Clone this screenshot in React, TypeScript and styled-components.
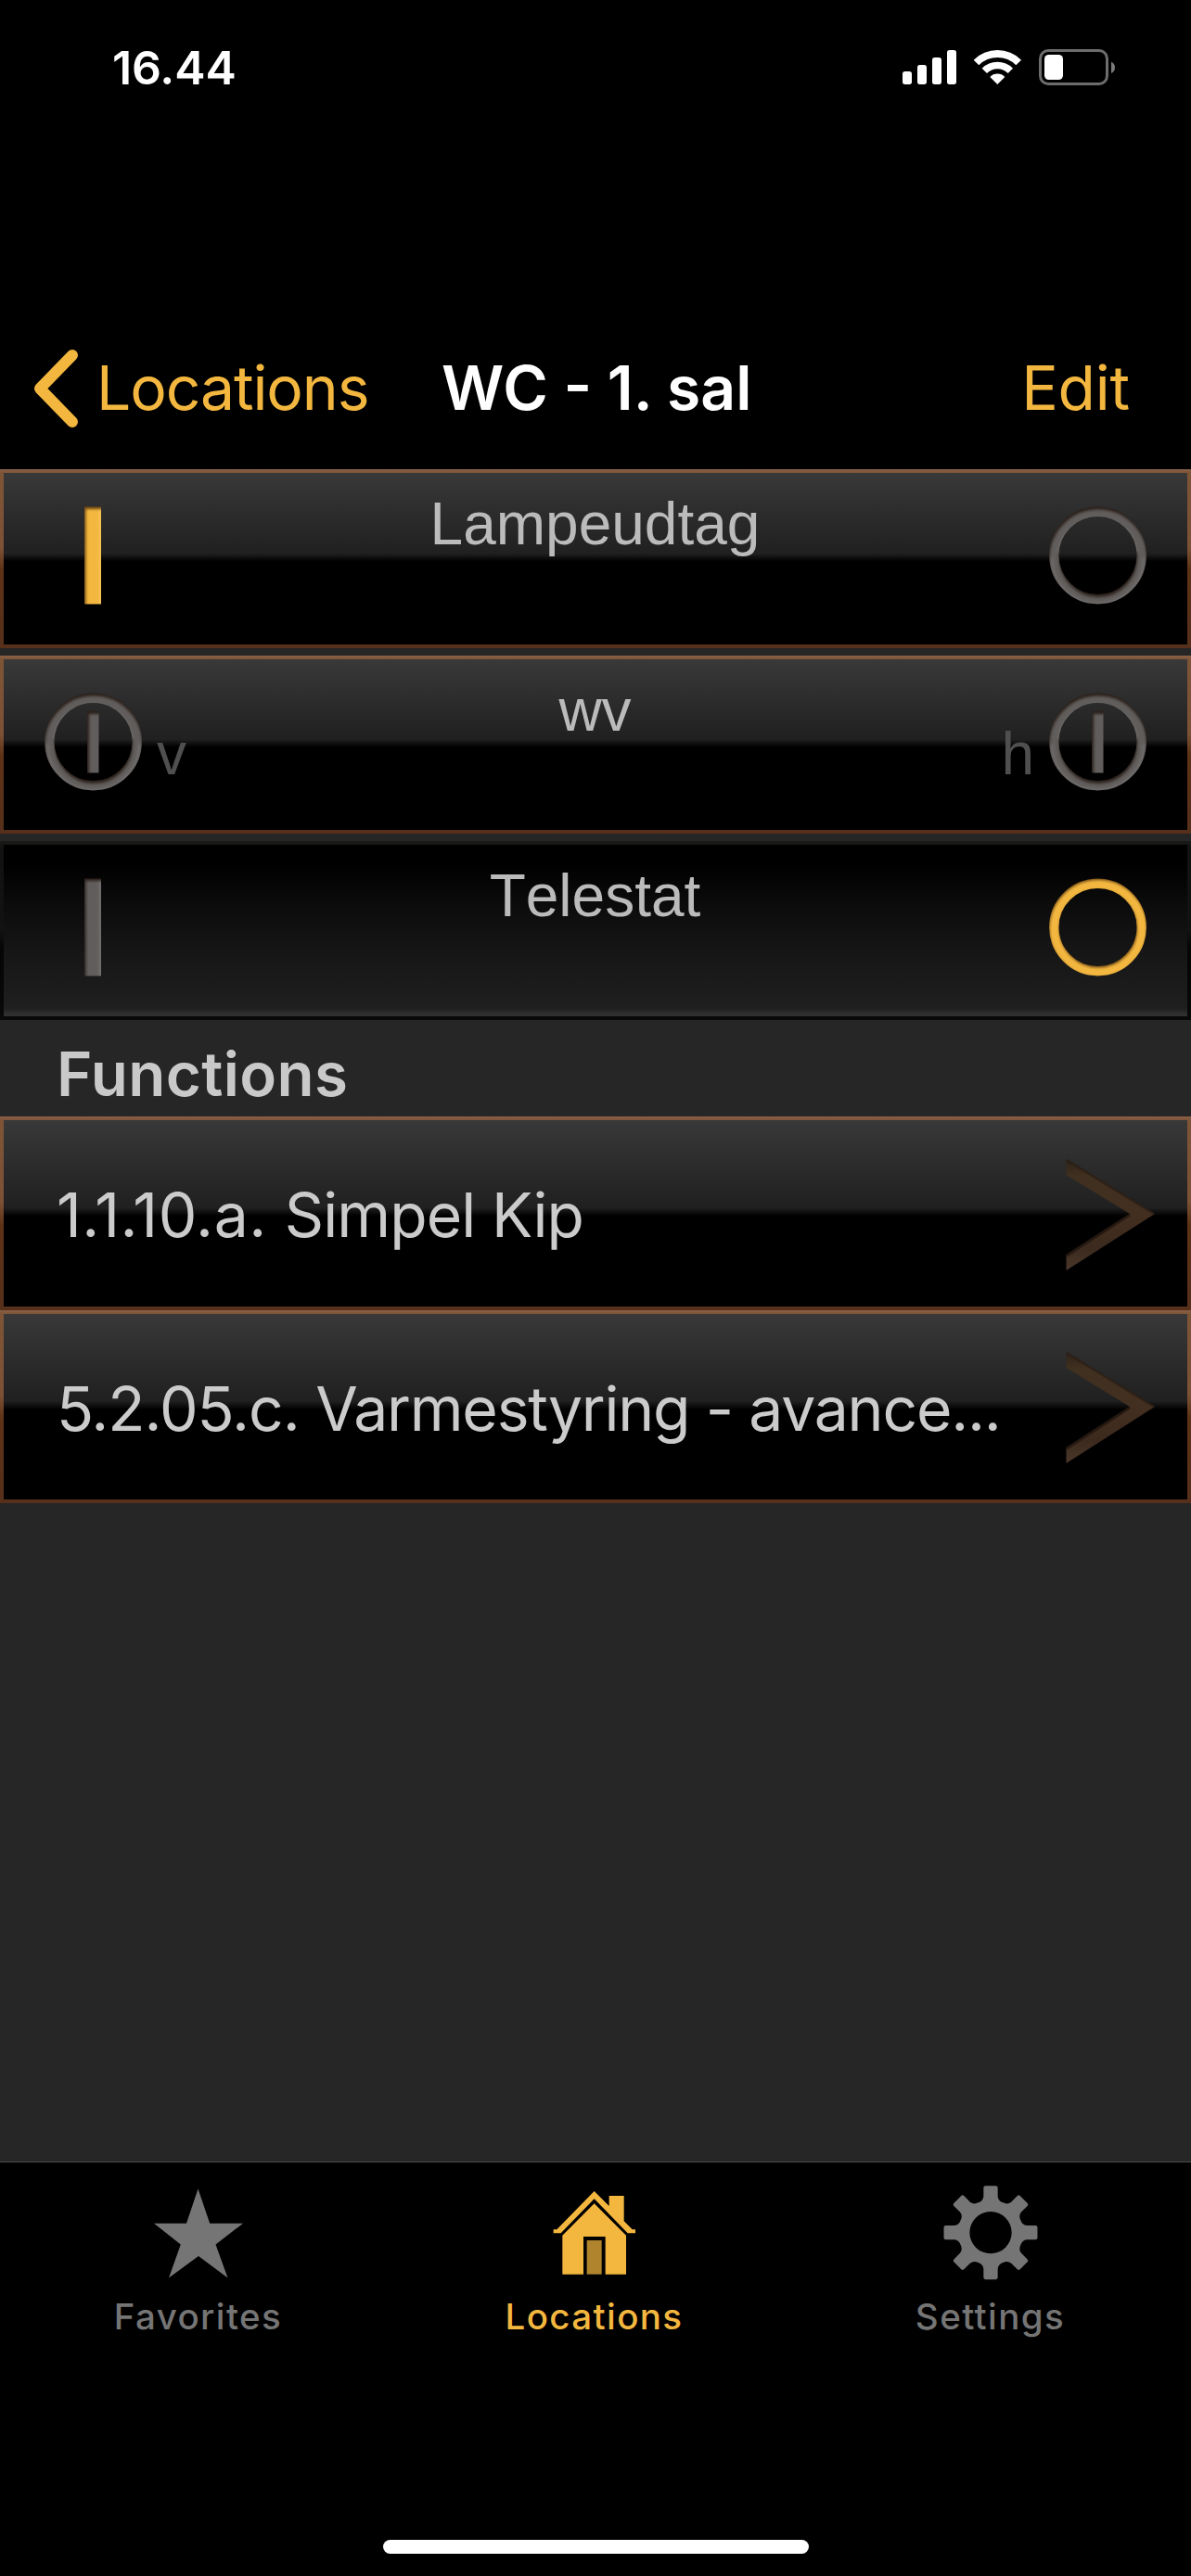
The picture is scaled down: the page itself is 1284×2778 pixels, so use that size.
import React from "react";
import styled, { createGlobalStyle, css } from "styled-components";

const AMBER = "#f3b73f";
const GREY = "#757575";

const GlobalStyle = createGlobalStyle`
  html, body { margin: 0; padding: 0; background: #000; }
  * { box-sizing: border-box; }
  svg { display: block; }
`;

const Screen = styled.div`
  width: 1284px;
  height: 2778px;
  display: flex;
  flex-direction: column;
  background: #262626;
  font-family: Inter, "Liberation Sans", sans-serif;
  overflow: hidden;
`;

const StatusBar = styled.header`
  height: 146px;
  flex: none;
  padding: 0 80px 0 121px;
  display: flex;
  align-items: center;
  justify-content: space-between;
  background: #000;
`;

const Clock = styled.span`
  font-size: 50px;
  line-height: 60px;
  font-weight: 600;
  letter-spacing: -0.1px;
  color: #fff;
`;

const NavBar = styled.nav`
  height: 360px;
  flex: none;
  padding: 184px 66px 0 36px;
  display: grid;
  grid-template-columns: 440px 1fr auto;
  align-items: start;
  background: #000;
`;

const navText = css`
  font-size: 66px;
  line-height: 176px;
  white-space: nowrap;
`;

const BackButton = styled.div`
  ${navText}
  display: flex;
  align-items: center;
  gap: 14px;
  color: ${AMBER};
  letter-spacing: -1.1px;
`;

const NavTitle = styled.h1`
  ${navText}
  margin: 0;
  font-weight: 600;
  color: #fff;
`;

const EditButton = styled.div`
  ${navText}
  color: ${AMBER};
  letter-spacing: -0.2px;
`;

const Content = styled.main`
  flex: 1;
  display: flex;
  flex-direction: column;
`;

const DeviceList = styled.section`
  display: flex;
  flex-direction: column;
  gap: 8px;
`;

const glossyFrame = css`
  background: linear-gradient(#8a6148, #7e5437 4px, #7c5135 44%, #5e3217 56%, #56301b);
`;

const glossyFill = css`
  background: linear-gradient(#393939 0, #373737 6px, #202020 47%, #000 51.5%);
`;

const DeviceFrame = styled.div<{ $height: number; $flat?: boolean }>`
  height: ${(p) => p.$height}px;
  padding: 4px;
  ${(p) =>
    p.$flat
      ? css`background: linear-gradient(#1a1a18, #121212 8px, #121212 50%, #050505 60%, #090909);`
      : glossyFrame}
`;

const DevicePanel = styled.div<{ $flat?: boolean }>`
  height: 100%;
  display: grid;
  grid-template-columns: 240px 1fr 240px;
  padding: 0 44px 0 43px;
  ${(p) =>
    p.$flat
      ? css`background: linear-gradient(#000 0, #000 20px, #0b0b0b 33%, #151515 60%, #1f1f1f 176px, #303030 183px);`
      : glossyFill}
`;

const Side = styled.div<{ $end?: boolean }>`
  display: flex;
  flex-direction: ${(p) => (p.$end ? "row-reverse" : "row")};
  gap: 15px;
  margin-right: ${(p) => (p.$end ? "-1px" : "0")};
  padding-top: 35px;
`;

const SideLabel = styled.span`
  font-family: "Liberation Sans", Arial, sans-serif;
  font-size: 64px;
  line-height: 74px;
  padding-top: 30px;
  color: #4f4f4f;
`;

const DeviceName = styled.div`
  font-family: "Liberation Sans", Arial, sans-serif;
  font-size: 64px;
  line-height: 74px;
  font-kerning: none;
  padding-top: 18px;
  text-align: center;
  color: #bbb;
`;

const SectionTitle = styled.h2`
  margin: 0;
  height: 104px;
  padding: 18px 0 0 61px;
  font-size: 65.5px;
  line-height: 82px;
  font-weight: 600;
  letter-spacing: 0.4px;
  color: #c9c9c9;
`;

const FunctionFrame = styled.div<{ $height: number }>`
  height: ${(p) => p.$height}px;
  padding: 4px;
  ${glossyFrame}
`;

const FunctionPanel = styled.div`
  height: 100%;
  display: flex;
  align-items: center;
  justify-content: space-between;
  padding: 3px 34px 0 57px;
  ${glossyFill}
`;

const FunctionName = styled.div`
  font-size: 66px;
  line-height: 80px;
  color: #cbcbcb;
  white-space: pre;
`;

const Tracked = styled.span<{ $spacing: number }>`
  letter-spacing: ${(p) => p.$spacing}px;
`;

const TabBar = styled.footer`
  height: 447px;
  flex: none;
  display: flex;
  flex-direction: column;
  justify-content: space-between;
  padding-bottom: 24px;
  border-top: 1px solid #4d4d4d;
  background: #000;
`;

const Tabs = styled.div`
  padding-top: 22px;
  display: grid;
  grid-template-columns: repeat(3, 427px);
`;

const Tab = styled.div<{ $active?: boolean }>`
  display: flex;
  flex-direction: column;
  align-items: center;
  gap: 11px;
  color: ${(p) => (p.$active ? AMBER : GREY)};
`;

const TabLabel = styled.span`
  font-size: 38.5px;
  line-height: 50px;
  font-weight: 500;
  letter-spacing: 1.4px;
`;

const HomeIndicator = styled.div`
  align-self: center;
  width: 459px;
  height: 15px;
  border-radius: 8px;
  background: #fff;
`;

function StatusIcons() {
  return (
    <svg width="232" height="42" viewBox="96 66 696 126">
      <g fill="#fff">
        <rect x="99" y="141" width="30" height="42" rx="8" />
        <rect x="147" y="120" width="30" height="63" rx="8" />
        <rect x="195" y="96" width="30" height="87" rx="8" />
        <rect x="243" y="72" width="30" height="111" rx="8" />
        <path d="M329 104A109 109 0 0 1 483 104L466 121A84 84 0 0 0 346 121Z" />
        <path d="M356 131A71 71 0 0 1 456 131L440 147A48 48 0 0 0 372 147Z" />
        <path d="M382 159A33 33 0 0 1 430 159L406 183Z" />
        <rect x="558" y="87" width="60" height="81" rx="14" />
      </g>
      <rect x="544.5" y="73.5" width="216" height="108" rx="26" fill="none" stroke="#6d6d6d" strokeWidth="9" />
      <path d="M774 110Q786 115 786 128.500Q786 142 774 147Z" fill="#7a7a7a" />
    </svg>
  );
}

function BackChevron() {
  return (
    <svg width="54" height="90" viewBox="0 0 54 90">
      <path d="M42 10L7 46L42 82" fill="none" stroke={AMBER} strokeWidth="12" strokeLinecap="round" strokeLinejoin="round" />
    </svg>
  );
}

type IndicatorKind = "bar" | "ring" | "power";

function Indicator({ id, kind, lit }: { id: string; kind: IndicatorKind; lit?: boolean }) {
  const edge = lit ? "#6b4310" : "#2b201a";
  const fill = lit ? AMBER : "#615d5c";
  const rim = lit ? "#fbc765" : "#7c7a79";
  return (
    <svg width="107" height="112" viewBox="0 0 107 112">
      <defs>
        <filter id={`${id}-soft`} x="-10%" y="-10%" width="120%" height="120%">
          <feGaussianBlur stdDeviation="1.4" />
        </filter>
        <mask id={`${id}-mask`} maskUnits="userSpaceOnUse" x="0" y="0" width="107" height="112">
          {kind === "bar" ? (
            <rect x="44" y="1.500" width="18" height="105" fill="#fff" />
          ) : (
            <circle cx="53.500" cy="54" r="47.200" fill="none" stroke="#fff" strokeWidth="10.500" />
          )}
          {kind === "power" && <rect x="47" y="21" width="12.500" height="66.500" fill="#fff" />}
        </mask>
      </defs>
      <g mask={`url(#${id}-mask)`}>
        <rect width="107" height="112" fill={edge} />
        {kind === "bar" ? (
          <g filter={`url(#${id}-soft)`}>
            <rect x="45.500" y="4" width="24" height="112" fill={fill} />
            <rect x="60" y="4" width="8" height="112" fill={rim} opacity="0.7" />
          </g>
        ) : (
          <g filter={`url(#${id}-soft)`} fill="none">
            <circle cx="54" cy={lit ? 55.5 : 57} r="47.200" stroke={fill} strokeWidth="10.500" />
            {!lit && <circle cx="53.500" cy="56.500" r="50" stroke={rim} strokeWidth="3" strokeDasharray="157 157" opacity="0.6" />}
            {!lit && <path d="M12 50A42 42 0 0 1 95 50" stroke={rim} strokeWidth="2.500" opacity="0.8" />}
          </g>
        )}
        {kind === "power" && (
          <g filter={`url(#${id}-soft)`}>
            <rect x="49" y="24" width="14" height="66" fill={fill} />
          </g>
        )}
      </g>
    </svg>
  );
}

function Disclosure({ id }: { id: string }) {
  return (
    <svg width="98" height="125" viewBox="0 0 98 125">
      <defs>
        <linearGradient id={id} x1="0" y1="0" x2="0" y2="1">
          <stop offset="0" stopColor="#2c211a" />
          <stop offset="0.150" stopColor="#40301f" />
          <stop offset="0.500" stopColor="#432f20" />
          <stop offset="0.800" stopColor="#3c2a1e" />
          <stop offset="1" stopColor="#4a382b" />
        </linearGradient>
      </defs>
      <path d="M1.500 2L97 61L1.500 122V105L70 61L1.500 19Z" fill={`url(#${id})`} />
      <path d="M2 3L96 61" stroke="#2a1d14" strokeWidth="2.500" opacity="0.7" />
      <path d="M2 106L70 62" stroke="#20150e" strokeWidth="3" opacity="0.8" />
    </svg>
  );
}

function StarIcon() {
  return (
    <svg width="102" height="108" viewBox="163 2354 102 108">
      <path fill="currentColor" d="M213.500 2360.500L226.200 2397.700H262L232.500 2420.500L245.500 2456.500L214 2433L182 2456.500L194.800 2420.500L166 2397.700H201Z" />
    </svg>
  );
}

function HouseIcon() {
  return (
    <svg width="102" height="108" viewBox="270 132 306 324">
      <g fill="currentColor">
        <path d="M422 159L470 207V174H518V256L545 283H555V295H530L422 184L314 295H290V283H301Z" />
        <path d="M422 199L525 302V428H458V306H387V428H319V302Z" />
        <rect x="398" y="318" width="48" height="110" opacity="0.720" />
      </g>
    </svg>
  );
}

function gearOutline() {
  const local: [number, number][] = [
    [-40.2, -97], [-25, -102], [-23, -117], [-23, -145], [-23, -151.5], [-17, -151.5],
    [17, -151.5], [23, -151.5], [23, -145], [23, -117], [25, -102], [40.2, -97],
  ];
  let d = "";
  for (let i = 0; i < 8; i++) {
    const a = (i * Math.PI) / 4;
    const p = local.map(
      ([x, y]) => `${(x * Math.cos(a) - y * Math.sin(a)).toFixed(1)} ${(x * Math.sin(a) + y * Math.cos(a)).toFixed(1)}`
    );
    d += `${i ? "L" : "M"}${p[0]}Q${p[1]} ${p[2]}L${p[3]}Q${p[4]} ${p[5]}L${p[6]}Q${p[7]} ${p[8]}L${p[9]}Q${p[10]} ${p[11]}`;
  }
  return `${d}ZM68 0A68 68 0 1 0 -68 0A68 68 0 1 0 68 0Z`;
}

function GearIcon() {
  return (
    <svg width="102" height="108" viewBox="-153 -161 306 324">
      <path fill="currentColor" fillRule="evenodd" d={gearOutline()} />
    </svg>
  );
}

const functions = [
  { code: "1.1.10.a. ", codeSpacing: 0.5, name: "Simpel Kip", nameSpacing: -0.9, height: 209 },
  { code: "5.2.05.c. ", codeSpacing: -1, name: "Varmestyring - avance...", nameSpacing: -1.2, height: 208 },
];

export default function App() {
  return (
    <>
      <GlobalStyle />
      <Screen>
        <StatusBar>
          <Clock>16.44</Clock>
          <StatusIcons />
        </StatusBar>
        <NavBar>
          <BackButton>
            <BackChevron />
            <span>Locations</span>
          </BackButton>
          <NavTitle>WC - 1. sal</NavTitle>
          <EditButton>Edit</EditButton>
        </NavBar>
        <Content>
          <DeviceList>
            <DeviceFrame $height={193}>
              <DevicePanel>
                <Side><Indicator id="lamp-on" kind="bar" lit /></Side>
                <DeviceName>Lampeudtag</DeviceName>
                <Side $end><Indicator id="lamp-off" kind="ring" /></Side>
              </DevicePanel>
            </DeviceFrame>
            <DeviceFrame $height={192}>
              <DevicePanel>
                <Side>
                  <Indicator id="wv-left" kind="power" />
                  <SideLabel>v</SideLabel>
                </Side>
                <DeviceName>wv</DeviceName>
                <Side $end>
                  <Indicator id="wv-right" kind="power" />
                  <SideLabel>h</SideLabel>
                </Side>
              </DevicePanel>
            </DeviceFrame>
            <DeviceFrame $height={193} $flat>
              <DevicePanel $flat>
                <Side><Indicator id="tele-on" kind="bar" /></Side>
                <DeviceName>Telestat</DeviceName>
                <Side $end><Indicator id="tele-off" kind="ring" lit /></Side>
              </DevicePanel>
            </DeviceFrame>
          </DeviceList>
          <SectionTitle>Functions</SectionTitle>
          {functions.map((f, i) => (
            <FunctionFrame key={f.name} $height={f.height}>
              <FunctionPanel>
                <FunctionName>
                  <Tracked $spacing={f.codeSpacing}>{f.code}</Tracked>
                  <Tracked $spacing={f.nameSpacing}>{f.name}</Tracked>
                </FunctionName>
                <Disclosure id={`disclosure-${i}`} />
              </FunctionPanel>
            </FunctionFrame>
          ))}
        </Content>
        <TabBar>
          <Tabs>
            <Tab>
              <StarIcon />
              <TabLabel>Favorites</TabLabel>
            </Tab>
            <Tab $active>
              <HouseIcon />
              <TabLabel>Locations</TabLabel>
            </Tab>
            <Tab>
              <GearIcon />
              <TabLabel>Settings</TabLabel>
            </Tab>
          </Tabs>
          <HomeIndicator />
        </TabBar>
      </Screen>
    </>
  );
}
